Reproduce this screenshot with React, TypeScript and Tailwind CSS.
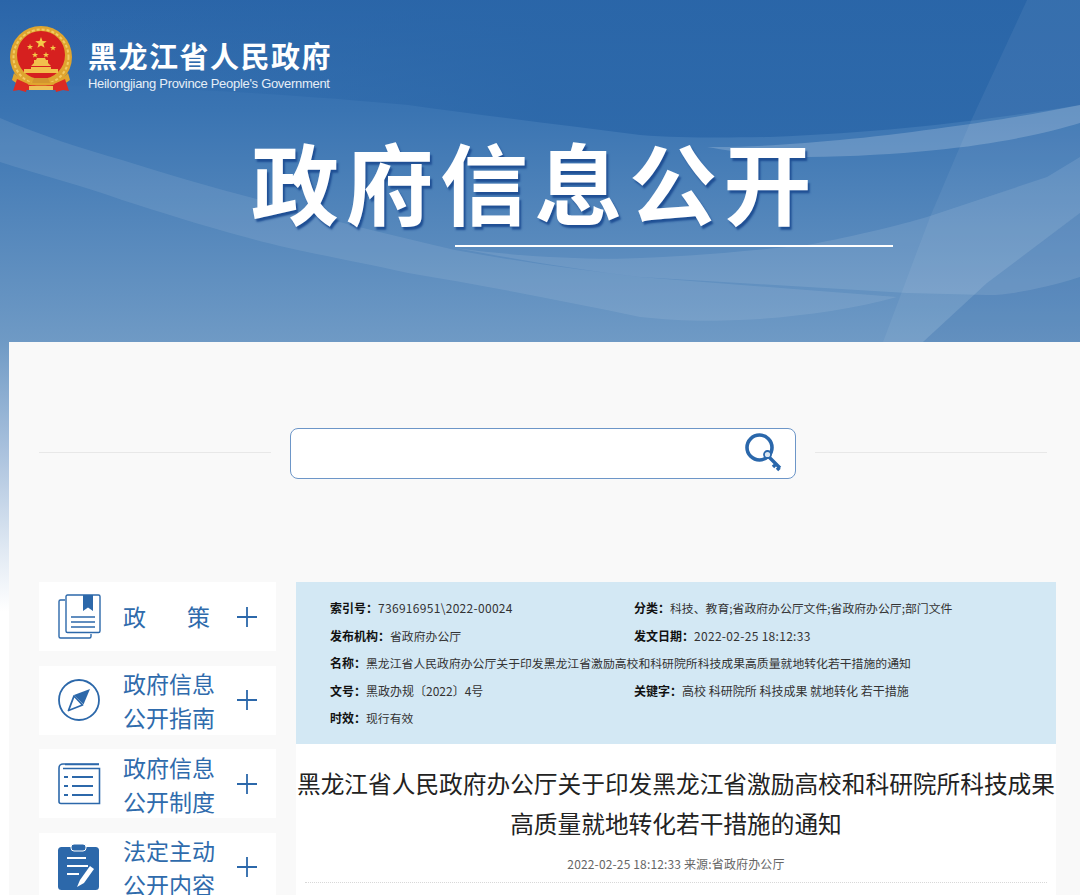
import React from "react";

const CJK = { fontFamily: '"Noto Sans CJK SC", "Noto Sans", sans-serif' };

function Emblem() {
  const stars: [number, number, number][] = [
    [31, 26, 6],
    [20, 30, 3.2],
    [25, 38, 3.2],
    [36, 38, 3.2],
    [43, 31, 3.2],
  ];
  const star = (cx: number, cy: number, r: number) =>
    Array.from({ length: 10 })
      .map((_, i) => {
        const a = -Math.PI / 2 + (i * Math.PI) / 5;
        const rad = i % 2 === 0 ? r : r * 0.42;
        return `${cx + rad * Math.cos(a)},${cy + rad * Math.sin(a)}`;
      })
      .join(" ");
  return (
    <svg width="64" height="68" viewBox="0 0 64 68" className="shrink-0">
      <circle cx="31" cy="31" r="31" fill="#dfa52f" />
      <circle cx="31" cy="31" r="27.500" fill="none" stroke="#f3cb63" strokeWidth="2" strokeDasharray="3 2" />
      <circle cx="31" cy="29" r="24" fill="#d6201f" />
      {stars.map(([x, y, r], i) => (
        <polygon key={i} points={star(x, y - 9, r)} fill="#f4c948" />
      ))}
      <path d="M21 40h20l-3-3v-3h-2l-1-2H27l-1 2h-2v3zM14 47h34v-4H41v-2H21v2h-7z" fill="#f2c04c" />
      <path d="M4 47c6 7 15 10 27 10s21-3 27-10l2 7c-7 6-17 9-29 9S9 60 2 54z" fill="#e0a52e" />
      <path d="M7 53l11 5-2 8-7-2-6 1zM55 53l-11 5 2 8 7-2 6 1z" fill="#dc2a22" />
      <path d="M16 58c5 2 25 2 30 0v6H16z" fill="#dc2a22" />
      <path d="M19 60h24v4H19z" fill="#eec158" />
      <path d="M24 52h14l2 5H22z" fill="#d3952e" />
    </svg>
  );
}

function BannerArt() {
  return (
    <svg
      className="absolute inset-0 pointer-events-none"
      width="1080"
      height="342"
      viewBox="0 0 1080 342"
      preserveAspectRatio="none"
    >
      <defs>
        <linearGradient id="sky" x1="0" y1="0" x2="1080" y2="0" gradientUnits="userSpaceOnUse">
          <stop offset="0" stopColor="#2a66a8" stopOpacity="0" />
          <stop offset="0.5" stopColor="#2a66a8" stopOpacity="0.8" />
          <stop offset="1" stopColor="#2a66a8" stopOpacity="0.8" />
        </linearGradient>
      </defs>
      {/* dark sky above the swoosh */}
      <path d="M0 0H1080V105C1000 118 900 132 770 137C720 138 680 138 640 135C560 125 480 115 408 105C300 95 150 85 0 85Z" fill="url(#sky)" />
      {/* darker corner to the right of the wedge */}
      <path d="M923 342L987 283L1080 213V342Z" fill="#2a66a8" opacity="0.18" />
      {/* top right swoosh */}
      <path d="M707 147C760 148 860 140 948 127C1000 120 1040 113 1080 105V123C1040 135 960 155 807 157C770 157 735 152 707 147Z" fill="#ffffff" opacity="0.19" />
      {/* wedge */}
      <path d="M1027 0L970 123L930 217L883 342H923L987 283L1080 213V0Z" fill="#ffffff" opacity="0.06" />
      {/* right band */}
      <path d="M455 248C530 258 600 260 640 258C700 256 757 250 807 245C860 235 900 225 927 217L1047 177L1080 157V277C1040 290 1000 296 987 295L907 293L640 277C580 270 520 260 455 248Z" fill="#ffffff" opacity="0.1" />
      {/* long left band */}
      <path d="M0 118C40 135 80 148 122 160C170 175 210 187 253 198C320 218 390 235 455 250C520 262 580 270 640 277L897 297C850 310 790 318 740 320C700 322 670 320 640 317C560 300 480 285 408 273C340 258 290 250 245 237C200 225 160 212 122 200C80 185 40 175 0 162Z" fill="#ffffff" opacity="0.09" />
    </svg>
  );
}

function BookIcon() {
  return (
    <svg width="44" height="46" viewBox="0 0 44 46" fill="none" stroke="#2c68aa" strokeWidth="1.4" className="shrink-0">
      <path d="M8 6H3.500A1.500 1.500 0 0 0 2 7.500V42.500A1.500 1.500 0 0 0 3.500 44H32.500A1.500 1.500 0 0 0 34 42.500V40" />
      <rect x="9" y="1" width="34" height="37.500" rx="1.500" />
      <path d="M26 1H36V17L31 13.500L26 17Z" fill="#2c68aa" stroke="none" />
      <path d="M14 23H38M14 28H38M14 33H38" />
    </svg>
  );
}

function CompassIcon() {
  return (
    <svg width="44" height="44" viewBox="0 0 44 44" fill="none" className="shrink-0">
      <circle cx="22" cy="22" r="20" stroke="#2c68aa" strokeWidth="1.800" />
      <path d="M33 11L17 17L26.500 26.500Z" fill="#2c68aa" />
      <path d="M17 18L11.500 32.500L25.500 27Z" stroke="#2c68aa" strokeWidth="1.800" strokeLinejoin="round" />
    </svg>
  );
}

function ListIcon() {
  return (
    <svg width="44" height="44" viewBox="0 0 44 44" fill="none" stroke="#2c68aa" strokeWidth="1.600" className="shrink-0">
      <path d="M42 2H6A4 4 0 0 0 2 6V39.500A2 2 0 0 0 4 41.500H42.500V6.500H6" />
      <path d="M8 2.500H42" />
      <path d="M7 15H11M15 15H36M7 24H11M15 24H36M7 33H11M15 33H36" strokeWidth="1.800" />
    </svg>
  );
}

function ClipboardIcon() {
  return (
    <svg width="44" height="48" viewBox="0 0 44 48" className="shrink-0">
      <rect x="1" y="4" width="41" height="43" rx="3.500" fill="#2c68aa" />
      <rect x="14" y="1" width="15" height="7" rx="3" fill="#2c68aa" stroke="#ffffff" strokeWidth="1" />
      <path d="M10 15H29M10 23H31M10 31H22" stroke="#ffffff" strokeWidth="1.800" />
      <path d="M37 26L33 23L23 37L20 44L27 40Z" fill="#ffffff" />
    </svg>
  );
}

function PlusMark() {
  return (
    <svg width="20" height="20" viewBox="0 0 20 20" className="shrink-0" stroke="#2c68aa" strokeWidth="1.800">
      <path d="M0 10H20M10 0V20" />
    </svg>
  );
}

function KeySearchIcon() {
  return (
    <svg width="38" height="40" viewBox="0 0 38 40" fill="none" className="shrink-0">
      <circle cx="14.500" cy="14.500" r="12.500" stroke="#2a67ab" strokeWidth="3.600" />
      <path d="M23 23L35 35M31 31L28 34M34.500 34.500L32 37" stroke="#2a67ab" strokeWidth="3.400" />
      <circle cx="22.500" cy="21.500" r="3.500" fill="#d9e6f2" stroke="#2a67ab" strokeWidth="1.800" />
    </svg>
  );
}

type MenuItem = { icon: React.ReactNode; lines: string[] };

const menu: MenuItem[] = [
  { icon: <BookIcon />, lines: ["政", "策"] },
  { icon: <CompassIcon />, lines: ["政府信息", "公开指南"] },
  { icon: <ListIcon />, lines: ["政府信息", "公开制度"] },
  { icon: <ClipboardIcon />, lines: ["法定主动", "公开内容"] },
];

function Meta({ label, value, cls = "text-[11.850px]" }: { label: string; value: string; cls?: string }) {
  return (
    <div className="whitespace-nowrap">
      <span className="font-bold text-[#111111]">{label}：</span>
      <span className={cls}>{value}</span>
    </div>
  );
}

export default function App() {
  return (
    <div
      className="w-full h-[895px] overflow-hidden flex flex-col bg-[linear-gradient(180deg,#2a65a9_0px,#3a74b2_110px,#6f9ac5_342px,#a9c1dd_450px,#e0e9f3_550px,#ffffff_612px,#ffffff_895px)]"
      style={CJK}
    >
      {/* Banner */}
      <header className="relative h-[342px] shrink-0 flex flex-col">
        <BannerArt />
        <div className="relative flex items-start pl-[10px] pt-[26px]">
          <Emblem />
          <div className="ml-[14px] pt-[11px] text-white">
            <div className="text-[29px] font-bold leading-[36px] tracking-[1.500px] whitespace-nowrap">黑龙江省人民政府</div>
            <div className="mt-[3px] text-[13px] leading-[16px] tracking-[-0.300px] whitespace-nowrap text-[#e6eef7]" style={{ fontFamily: '"Liberation Sans", sans-serif' }}>
              Heilongjiang Province People's Government
            </div>
          </div>
        </div>
        <h1 className="relative mt-[32px] pl-[251px] text-[88px] leading-[108px] font-bold tracking-[6.500px] text-white whitespace-nowrap [text-shadow:2px_3px_2px_#1f4f94]">
          政府信息公开
        </h1>
        <div className="relative mt-[11px] ml-[455px] w-[438px] h-[2px] bg-white"></div>
      </header>

      {/* Main panel */}
      <main className="ml-[9px] flex-1 bg-[#f9f9f9] pl-[30px] pt-[86px]">
        <div className="flex items-center w-[1008px]">
          <div className="w-[232px] h-px bg-[#e8e8e8] -translate-y-px"></div>
          <div className="ml-[19px] w-[506px] h-[51px] bg-white border border-[#6d96c8] rounded-lg flex items-center justify-end pr-[12px] pb-px">
            <KeySearchIcon />
          </div>
          <div className="ml-[19px] w-[232px] h-px bg-[#e8e8e8] -translate-y-px"></div>
        </div>

        <div className="mt-[103px] flex items-start">
          <nav className="w-[237px] shrink-0 flex flex-col gap-[14.500px]">
            {menu.map((m) => (
              <div key={m.lines.join("")} className="h-[69px] bg-white flex items-center pl-[18px] text-[#2f6bac]">
                <div className="w-[44px] flex justify-center">{m.icon}</div>
                <div className="ml-[22px] w-[92px] text-[23px] leading-[34px]">
                  {m.lines[0].length === 1 ? (
                    <div className="flex justify-between w-[87px] -mt-[2px]">
                      <span>{m.lines[0]}</span>
                      <span>{m.lines[1]}</span>
                    </div>
                  ) : (
                    m.lines.map((l) => <div key={l} className="whitespace-nowrap">{l}</div>)
                  )}
                </div>
                <div className="ml-[22px]">
                  <PlusMark />
                </div>
              </div>
            ))}
          </nav>

          <section className="ml-[20px] w-[760px] h-[320px] bg-white">
            <div className="h-[162px] bg-[#d3e8f4] pl-[34px] pt-[12px] text-[12px] leading-[27.600px] text-[#333333]">
              <div className="grid grid-cols-[304px_1fr]">
                <Meta label="索引号" value="736916951\2022-00024" cls="tracking-[0.3px]" />
                <Meta label="分类" value="科技、教育;省政府办公厅文件;省政府办公厅;部门文件" />
                <Meta label="发布机构" value="省政府办公厅" />
                <Meta label="发文日期" value="2022-02-25 18:12:33" cls="tracking-[0.3px]" />
                <div className="col-span-2">
                  <Meta label="名称" value="黑龙江省人民政府办公厅关于印发黑龙江省激励高校和科研院所科技成果高质量就地转化若干措施的通知" />
                </div>
                <Meta label="文号" value="黑政办规〔2022〕4号" cls="text-[12px]" />
                <Meta label="关键字" value="高校 科研院所 科技成果 就地转化 若干措施" cls="text-[12px]" />
                <Meta label="时效" value="现行有效" />
              </div>
            </div>
            <h2 className="mt-[20px] text-center text-[23.700px] leading-[39.500px] font-normal text-[#222222]">
              黑龙江省人民政府办公厅关于印发黑龙江省激励高校和科研院所科技成果高质量就地转化若干措施的通知
            </h2>
            <p className="mt-[13px] text-center text-[12px] leading-[16px] tracking-[0.150px] text-[#666666]">2022-02-25 18:12:33 来源:省政府办公厅</p>
            <div className="mx-[9px] mt-[10px] border-t border-dotted border-[#d8d8d8]"></div>
          </section>
        </div>
      </main>
    </div>
  );
}
